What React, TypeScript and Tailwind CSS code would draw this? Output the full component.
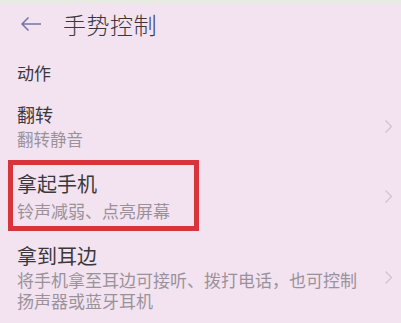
import { ReactNode } from "react";

const font = { fontFamily: '"Noto Sans CJK SC", "Noto Sans", sans-serif' };

function Chevron() {
  return (
    <svg width="9" height="15" viewBox="0 0 9 15" fill="none" className="shrink-0">
      <polyline points="1.5,1.5 7.5,7.5 1.5,13.5" stroke="#cfc4ce" strokeWidth="1.3" />
    </svg>
  );
}

interface ItemProps {
  title: string;
  titleSize: string;
  className?: string;
  children: ReactNode;
  overlay?: ReactNode;
}

function Item({ title, titleSize, className, children, overlay }: ItemProps) {
  return (
    <div className={`relative flex items-center pl-[17px] pr-[8px] ${className ?? ""}`}>
      {overlay}
      <div className="min-w-0 flex-1">
        <div className={`${titleSize} text-[#3b383c]`}>{title}</div>
        {children}
      </div>
      <Chevron />
    </div>
  );
}

export default function App() {
  return (
    <div className="h-[323px] w-[401px] overflow-hidden bg-[#f3e2f0]" style={font}>
      <div className="h-[4px] bg-[#e7ece3]" />
      <header className="flex h-[40px] items-center">
        <svg width="22" height="16" viewBox="0 0 22 16" fill="none" className="ml-[20px]">
          <path d="M21 8H2M8.5 1.5 2 8l6.5 6.5" stroke="#7476a8" strokeWidth="1.5" />
        </svg>
        <h1 className="ml-[21px] text-[23px] font-light leading-[30px] tracking-[0.5px] text-[#3a373b]">
          手势控制
        </h1>
      </header>

      <div className="mt-[19px] pl-[17px] text-[17px] leading-[20px] text-[#3b383c]">动作</div>

      <Item title="翻转" titleSize="text-[18px] leading-[24px]" className="mt-[19px]">
        <div className="mt-[2px] text-[16.5px] leading-[22px] text-[#9a929b]">翻转静音</div>
      </Item>

      <Item
        title="拿起手机"
        titleSize="text-[20px] leading-[26px]"
        className="mt-[21px]"
        overlay={
          <div className="pointer-events-none absolute left-[8px] top-[-11px] h-[71px] w-[191px] border-[5px] border-[#d8343c]" />
        }
      >
        <div className="mt-[3px] text-[17px] leading-[22px] text-[#9a929b]">铃声减弱、点亮屏幕</div>
      </Item>

      <Item title="拿到耳边" titleSize="text-[20px] leading-[24px]" className="mt-[22px]">
        <div className="mt-[1px] text-[17px] leading-[21px] text-[#9a929b]">
          将手机拿至耳边可接听、拨打电话，也可控制
          <br />
          扬声器或蓝牙耳机
        </div>
      </Item>
    </div>
  );
}
